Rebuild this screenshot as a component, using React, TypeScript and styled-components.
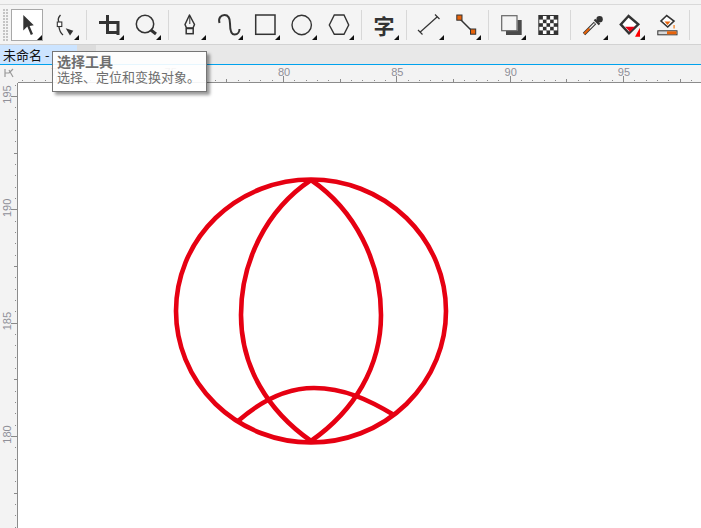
import React from "react";
import styled, { createGlobalStyle } from "styled-components";

const GlobalStyle = createGlobalStyle`
    html, body {
        margin: 0;
        padding: 0;
        background: #ffffff;
    }
    #root {
        width: 701px;
        height: 528px;
        overflow: hidden;
    }
`;

const Window = styled.div`
    position: relative;
    width: 701px;
    height: 528px;
    display: flex;
    flex-direction: column;
    font-family: "Noto Sans CJK SC", "Liberation Sans", sans-serif;
    background: #f3f3f3;
    overflow: hidden;
`;

const Toolbar = styled.div`
    height: 35px;
    margin-top: 4px;
    padding-top: 4px;
    display: flex;
    align-items: flex-start;
    background: #f4f4f4;
    border-top: 1px solid #d9d9d9;
    border-bottom: 1px solid #d2d2d2;
    flex: none;
`;

const Grip = styled.div`
    width: 5px;
    height: 32px;
    margin: 0 0.5px 0 3px;
    background-image: radial-gradient(circle at 1px 1px, #c4c4c4 1px, transparent 1px);
    background-size: 3px 3px;
`;

const ToolButton = styled.div<{ $active?: boolean }>`
    position: relative;
    width: 32px;
    height: 32px;
    margin: 0 2.5px;
    box-sizing: border-box;
    flex: none;
    background: ${(p) => (p.$active ? "#ffffff" : "transparent")};
    outline: ${(p) => (p.$active ? "1px solid #a8a8a8" : "none")};
    outline-offset: -1px;
`;

const Corner = styled.span`
    position: absolute;
    right: 1px;
    bottom: 1px;
    width: 0;
    height: 0;
    border-left: 5px solid transparent;
    border-bottom: 5px solid #111111;
`;

const ToolSeparator = styled.div`
    width: 1px;
    height: 30px;
    margin: 1px 3.5px 0;
    background: #d8d8d8;
    flex: none;
`;

const GlyphIcon = styled.span`
    display: flex;
    align-items: center;
    justify-content: center;
    width: 32px;
    height: 32px;
    font-size: 21px;
    font-weight: 700;
    line-height: 1;
    color: #333333;
`;

const TabRow = styled.div`
    height: 19px;
    display: flex;
    flex: none;
    background: #e8e8e8;
    border-bottom: 1px solid #00a2ed;
`;

const Tab = styled.div`
    width: 77px;
    height: 19px;
    padding-left: 3px;
    box-sizing: border-box;
    background: #cce4ff;
    color: #111111;
    font-size: 13px;
    line-height: 19px;
    white-space: nowrap;
`;

const NewTab = styled.div`
    width: 19px;
    height: 19px;
    background: #dcdcdc;
    color: #9a9a9a;
    font-size: 13px;
    line-height: 19px;
    text-align: center;
`;

const Workspace = styled.div`
    flex: 1;
    display: grid;
    grid-template-columns: 18px 1fr;
    grid-template-rows: 18px 1fr;
    min-height: 0;
`;

const RulerCorner = styled.div`
    display: flex;
    align-items: flex-start;
    justify-content: flex-start;
    background: #f3f3f3;
`;

const RulerSvg = styled.svg`
    display: block;
    background: #f3f3f3;
`;

const Canvas = styled.svg`
    display: block;
    background: #ffffff;
`;

const RulerLabel = styled.text`
    font-family: "Liberation Sans", sans-serif;
    font-size: 11px;
    fill: #8f8f98;
`;

const Tooltip = styled.div`
    position: absolute;
    left: 52px;
    top: 51px;
    width: 155px;
    height: 41px;
    box-sizing: border-box;
    padding: 1px 4px;
    background: rgba(255, 255, 255, 0.9);
    border: 1px solid #767676;
    box-shadow: 3px 3px 3px rgba(0, 0, 0, 0.4);
    color: #6e6e6e;
    font-size: 13px;
    line-height: 16px;
    white-space: nowrap;
`;

const TooltipTitle = styled.div`
    font-size: 14px;
    font-weight: 700;
`;

const DARK = "#333333";
const ORANGE = "#e8630a";

type Tool = { key: string; corner?: boolean; active?: boolean; icon: React.ReactNode };

const Svg: React.FC<{ children: React.ReactNode }> = ({ children }) => (
    <svg width="32" height="32" viewBox="0 0 32 32" fill="none" style={{ display: "block" }}>
        {children}
    </svg>
);

const checkerCells: [number, number][] = [];
for (let r = 0; r < 5; r++) {
    for (let c = 0; c < 5; c++) {
        if ((r + c) % 2 === 1) checkerCells.push([c, r]);
    }
}

const toolGroups: Tool[][] = [
    [
        {
            key: "pick",
            corner: true,
            active: true,
            icon: (
                <Svg>
                    <path d="M12.3 6V21.5L16.3 17.6L19.8 26L22 25L18.6 17L22.8 16.2Z" fill={DARK} />
                </Svg>
            ),
        },
        {
            key: "shape",
            corner: true,
            icon: (
                <Svg>
                    <path d="M12.5 6Q9 10 11 13" stroke={DARK} strokeWidth="1.3" />
                    <path d="M11 18Q11.5 23 15 26" stroke={DARK} strokeWidth="1.3" />
                    <rect x="9.3" y="13" width="4.5" height="4.5" fill="#fff" stroke={DARK} strokeWidth="1.1" />
                    <path d="M17.7 19.3L25.3 21.7L22 26.5Z" fill={DARK} />
                </Svg>
            ),
        },
    ],
    [
        {
            key: "crop",
            corner: true,
            icon: (
                <Svg>
                    <path d="M14.5 6V23.5H26M6 13.5H25V26" stroke={DARK} strokeWidth="3" />
                </Svg>
            ),
        },
        {
            key: "zoom",
            corner: true,
            icon: (
                <Svg>
                    <circle cx="15" cy="15" r="8.7" stroke={DARK} strokeWidth="1.5" />
                    <path d="M20.5 20.8L26 25" stroke={DARK} strokeWidth="3" />
                </Svg>
            ),
        },
    ],
    [
        {
            key: "pen",
            corner: true,
            icon: (
                <Svg>
                    <path d="M14.5 6L10 15.5L11.5 19H18L19.5 15.5Z" stroke={DARK} strokeWidth="1.5" strokeLinejoin="round" />
                    <path d="M14.8 7V15" stroke={DARK} strokeWidth="1" />
                    <rect x="11.2" y="19.5" width="7" height="5.2" stroke={DARK} strokeWidth="1.5" />
                </Svg>
            ),
        },
        {
            key: "curve",
            corner: true,
            icon: (
                <Svg>
                    <path
                        d="M7.5 14C6 9 9 6 12.5 6C16 6 18 9.5 18 14.5C18 20 18.5 25.5 22.5 25.5C26 25.5 27.5 22.5 27.5 20"
                        stroke={DARK}
                        strokeWidth="2"
                    />
                </Svg>
            ),
        },
        {
            key: "rect",
            corner: true,
            icon: (
                <Svg>
                    <rect x="6.7" y="6" width="19.3" height="19.3" stroke={DARK} strokeWidth="1.5" />
                </Svg>
            ),
        },
        {
            key: "ellipse",
            corner: true,
            icon: (
                <Svg>
                    <circle cx="15.7" cy="16" r="9.7" stroke={DARK} strokeWidth="1.4" />
                </Svg>
            ),
        },
        {
            key: "polygon",
            corner: true,
            icon: (
                <Svg>
                    <path d="M6.3 16L11.3 6H21L25.7 16L21 25.3H11.3Z" stroke={DARK} strokeWidth="1.4" />
                </Svg>
            ),
        },
    ],
    [
        {
            key: "text",
            corner: true,
            icon: <GlyphIcon>字</GlyphIcon>,
        },
    ],
    [
        {
            key: "dimension",
            corner: true,
            icon: (
                <Svg>
                    <path d="M7 23.3L24.3 7.7" stroke={DARK} strokeWidth="1.2" />
                    <path d="M5 21L9.5 25.5M22 5.5L26.5 10" stroke={DARK} strokeWidth="1.2" />
                </Svg>
            ),
        },
        {
            key: "connector",
            corner: true,
            icon: (
                <Svg>
                    <path d="M9 9L23 23" stroke={DARK} strokeWidth="1.5" />
                    <rect x="6.8" y="6" width="5.2" height="5.2" fill={ORANGE} stroke={DARK} strokeWidth="1" />
                    <rect x="20.5" y="20" width="5.2" height="5.2" fill={ORANGE} stroke={DARK} strokeWidth="1" />
                </Svg>
            ),
        },
    ],
    [
        {
            key: "shadow",
            corner: true,
            icon: (
                <Svg>
                    <path d="M22.5 11H26.7V26H11V21.7H22.5Z" fill="#4a4a4a" />
                    <rect x="6.7" y="6.7" width="15.3" height="15" fill="#f4f4f4" stroke="#666666" strokeWidth="1.2" />
                </Svg>
            ),
        },
        {
            key: "transparency",
            icon: (
                <Svg>
                    <rect x="6.3" y="6" width="20" height="20" fill={DARK} />
                    {checkerCells.map(([c, r]) => (
                        <rect key={`${c}-${r}`} x={7.3 + c * 3.6} y={7 + r * 3.6} width="3.6" height="3.6" fill="#ffffff" />
                    ))}
                </Svg>
            ),
        },
    ],
    [
        {
            key: "eyedropper",
            corner: true,
            icon: (
                <Svg>
                    <path d="M7 25L18 14" stroke={DARK} strokeWidth="3.4" />
                    <path d="M7.2 24.8L12.5 19.5" stroke={ORANGE} strokeWidth="2" />
                    <path d="M12.5 19.5L17.5 14.5" stroke="#f4f4f4" strokeWidth="1.3" />
                    <path d="M17.5 10.5L22.5 15.5" stroke={DARK} strokeWidth="2.2" />
                    <circle cx="22.6" cy="10.2" r="3.2" fill={DARK} />
                </Svg>
            ),
        },
        {
            key: "fill",
            corner: true,
            icon: (
                <Svg>
                    <path d="M14.5 7L6.8 15.4L15 24.3L24.3 15.4Z" fill="#ffffff" stroke={DARK} strokeWidth="2.4" />
                    <path d="M11 17.7H21L16 22.7Z" fill="#e60012" />
                    <path d="M21 27.7L26 18.7V27.7Z" fill="#ff0000" />
                </Svg>
            ),
        },
        {
            key: "interactive-fill",
            icon: (
                <Svg>
                    <path d="M15.7 6.5L10 12L16.7 18L23 12Z" fill="#ffffff" stroke={DARK} strokeWidth="1.6" />
                    <path d="M13.5 12.5H19.5L16.5 16Z" fill={ORANGE} />
                    <rect x="22.2" y="16" width="1.8" height="3.5" fill="#f5a25d" />
                    <rect x="6.8" y="21.8" width="19.2" height="4" fill="#d9d9d9" stroke={DARK} strokeWidth="1" />
                    <rect x="16" y="22.3" width="9.5" height="3" fill={ORANGE} />
                </Svg>
            ),
        },
    ],
];

const UNIT_PX = 113.33 / 10;

const HorizontalRuler: React.FC = () => {
    // the ruler starts at x=18 in the page, 80 sits at x=283
    const ticks: React.ReactNode[] = [];
    const labels: React.ReactNode[] = [];
    for (let i = -24; i < 40; i++) {
        const x = 283 - 18 + i * UNIT_PX;
        if (x < 1 || x > 683) continue;
        if (i % 10 === 0) {
            ticks.push(<rect key={i} x={Math.round(x)} y={11} width={1} height={6} fill="#8a8a8a" />);
            labels.push(
                <RulerLabel key={i} x={x + 1} y={10.5} textAnchor="middle">
                    {80 + i / 2}
                </RulerLabel>
            );
        } else if (i % 5 === 0) {
            ticks.push(<rect key={i} x={Math.round(x)} y={14} width={1} height={3} fill="#8a8a8a" />);
        } else {
            ticks.push(<rect key={i} x={Math.round(x)} y={15} width={1} height={1} fill="#8a8a8a" />);
        }
    }
    return (
        <RulerSvg width="683" height="18">
            {labels}
            {ticks}
            <rect x="0" y="17" width="683" height="1" fill="#8c8c8c" />
        </RulerSvg>
    );
};

const VerticalRuler: React.FC = () => {
    // the ruler starts at y=83 in the page, 195 sits at y=96
    const ticks: React.ReactNode[] = [];
    const labels: React.ReactNode[] = [];
    for (let i = -1; i < 42; i++) {
        const y = 96 - 83 + i * UNIT_PX;
        if (y < 0 || y > 446) continue;
        if (i % 10 === 0) {
            ticks.push(<rect key={i} x={11} y={Math.round(y)} width={6} height={1} fill="#8a8a8a" />);
            labels.push(
                <RulerLabel key={i} transform={`translate(11 ${y - 1.5}) rotate(-90)`} textAnchor="middle">
                    {195 - i / 2}
                </RulerLabel>
            );
        } else if (i % 5 === 0) {
            ticks.push(<rect key={i} x={14} y={Math.round(y)} width={3} height={1} fill="#8a8a8a" />);
        } else {
            ticks.push(<rect key={i} x={15} y={Math.round(y)} width={1} height={1} fill="#8a8a8a" />);
        }
    }
    return (
        <RulerSvg width="18" height="445">
            {labels}
            {ticks}
            <rect x="17" y="0" width="1" height="445" fill="#8c8c8c" />
        </RulerSvg>
    );
};

const Drawing: React.FC = () => (
    // canvas origin is at page (18, 83)
    <Canvas width="683" height="445" viewBox="18 83 683 445" fill="none">
        <g stroke="#e60012" strokeWidth="4.6">
            <ellipse cx="311" cy="311" rx="135" ry="131.5" />
            <path d="M311 180C266 210 241 262 241 315C241 367 268 411 311 441" />
            <path d="M311 180C355 210 381 262 381 315C381 367 354 411 311 441" />
            <path d="M238 421C262 400 287 388 314 388C344 388 369 400 394 415" />
        </g>
    </Canvas>
);

export default function App() {
    return (
        <Window>
            <GlobalStyle />
            <Toolbar>
                <Grip />
                {toolGroups.map((group, gi) => (
                    <React.Fragment key={gi}>
                        {group.map((tool) => (
                            <ToolButton key={tool.key} $active={tool.active}>
                                {tool.icon}
                                {tool.corner && <Corner />}
                            </ToolButton>
                        ))}
                        <ToolSeparator />
                    </React.Fragment>
                ))}
            </Toolbar>
            <TabRow>
                <Tab>未命名 -</Tab>
                <NewTab>+</NewTab>
            </TabRow>
            <Workspace>
                <RulerCorner>
                    <svg width="18" height="18" viewBox="0 0 18 18" fill="none">
                        <path d="M5 4V12M5 8H9M9 5L13 12M9 8L13 4" stroke="#9a9a9a" strokeWidth="1.2" />
                    </svg>
                </RulerCorner>
                <HorizontalRuler />
                <VerticalRuler />
                <Drawing />
            </Workspace>
            <Tooltip>
                <TooltipTitle>选择工具</TooltipTitle>
                <div>选择、定位和变换对象。</div>
            </Tooltip>
        </Window>
    );
}
